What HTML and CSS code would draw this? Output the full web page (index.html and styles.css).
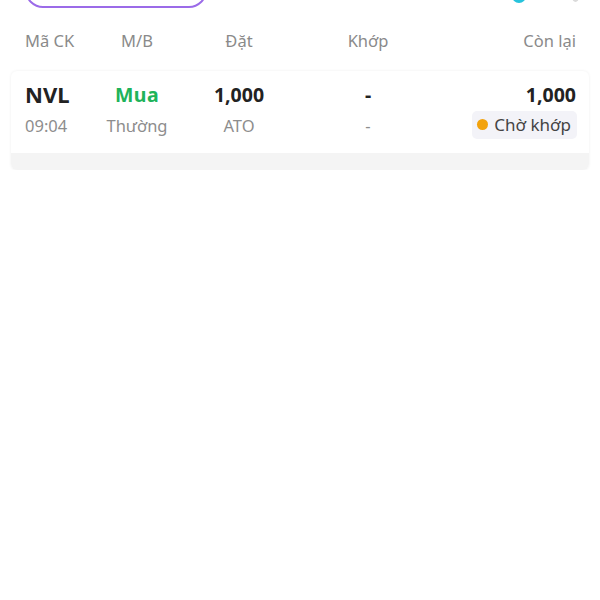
FILE: index.html
```html
<!DOCTYPE html>
<html lang="vi">
<head>
  <meta charset="UTF-8" />
  <title>Sổ lệnh</title>
  <link rel="stylesheet" href="styles.css">
</head>
<body>
  <div class="page">
    <!-- top toolbar, scrolled mostly out of view -->
    <div class="toolbar">
      <div class="filter-btn"></div>
      <div class="toolbar-icons">
        <span class="dot-cyan"></span>
        <span class="dot-grey"></span>
      </div>
    </div>

    <div class="grid head">
      <div class="c1">Mã CK</div>
      <div class="c2">M/B</div>
      <div class="c3">Đặt</div>
      <div class="c4">Khớp</div>
      <div class="c5">Còn lại</div>
    </div>

    <div class="card">
      <div class="grid row-top">
        <div class="c1 sym">NVL</div>
        <div class="c2 buy">Mua</div>
        <div class="c3 strong">1,000</div>
        <div class="c4 strong">-</div>
        <div class="c5 strong">1,000</div>
      </div>
      <div class="grid row-sub">
        <div class="c1">09:04</div>
        <div class="c2">Thường</div>
        <div class="c3">ATO</div>
        <div class="c4">-</div>
        <div class="c5"><span class="badge"><span class="badge-dot"></span>Chờ khớp</span></div>
      </div>
      <div class="card-foot"></div>
    </div>
  </div>
</body>
</html>
```

FILE: styles.css
```css
body {
  margin: 0;
  padding: 0;
  background: #fff;
  font-family: "Noto Sans", "Open Sans", sans-serif;
  color: #222;
}

.page {
  padding: 0 11px;
}

.toolbar {
  display: flex;
  justify-content: space-between;
  align-items: flex-end;
  height: 9px;
  overflow: hidden;
  padding: 0 14px;
}

.filter-btn {
  flex: none;
  width: 178px;
  height: 36px;
  border: 2px solid #9b6be8;
  border-radius: 18px;
  margin-bottom: 1px;
}

.toolbar-icons {
  display: flex;
  align-items: flex-end;
  gap: 46px;
  margin-right: -4px;
  margin-bottom: 6px;
}

.dot-cyan {
  width: 14px;
  height: 14px;
  border-radius: 50%;
  background: #27c3dc;
}

.dot-grey {
  width: 7px;
  height: 10px;
  border-radius: 50%;
  background: #dadada;
  margin-bottom: 1px;
}

.grid {
  display: grid;
  grid-template-columns: 60px 104px 100px 158px 1fr;
  padding: 0 13px 0 14px;
  align-items: center;
}

.c1 { text-align: left; }
.c2, .c3, .c4 { text-align: center; }
.c5 { text-align: right; }

.head {
  height: 62px;
  font-size: 16.5px;
  color: #8a8a8a;
}

.card {
  border-radius: 6px;
  box-shadow: 0 0 3px rgba(0, 0, 0, 0.07);
  overflow: hidden;
}

.row-top {
  padding-top: 8px;
  height: 28px;
  font-size: 19.5px;
  font-weight: bold;
}

.sym {
  font-size: 22px;
}

.buy {
  color: #20b35a;
  letter-spacing: 0.5px;
}

.row-sub {
  height: 34px;
  font-size: 16.5px;
  color: #8d8d8d;
  padding-top: 1px;
  padding-bottom: 11px;
}

.badge {
  display: inline-flex;
  align-items: center;
  gap: 6px;
  background: #f3f3f8;
  color: #444;
  border-radius: 5px;
  padding: 2px 6px 3px 5px;
  margin-right: -1px;
  font-size: 17px;
}

.badge-dot {
  width: 11px;
  height: 11px;
  border-radius: 50%;
  background: #f2a20c;
}

.card-foot {
  height: 17px;
  background: #f4f4f4;
}
```
